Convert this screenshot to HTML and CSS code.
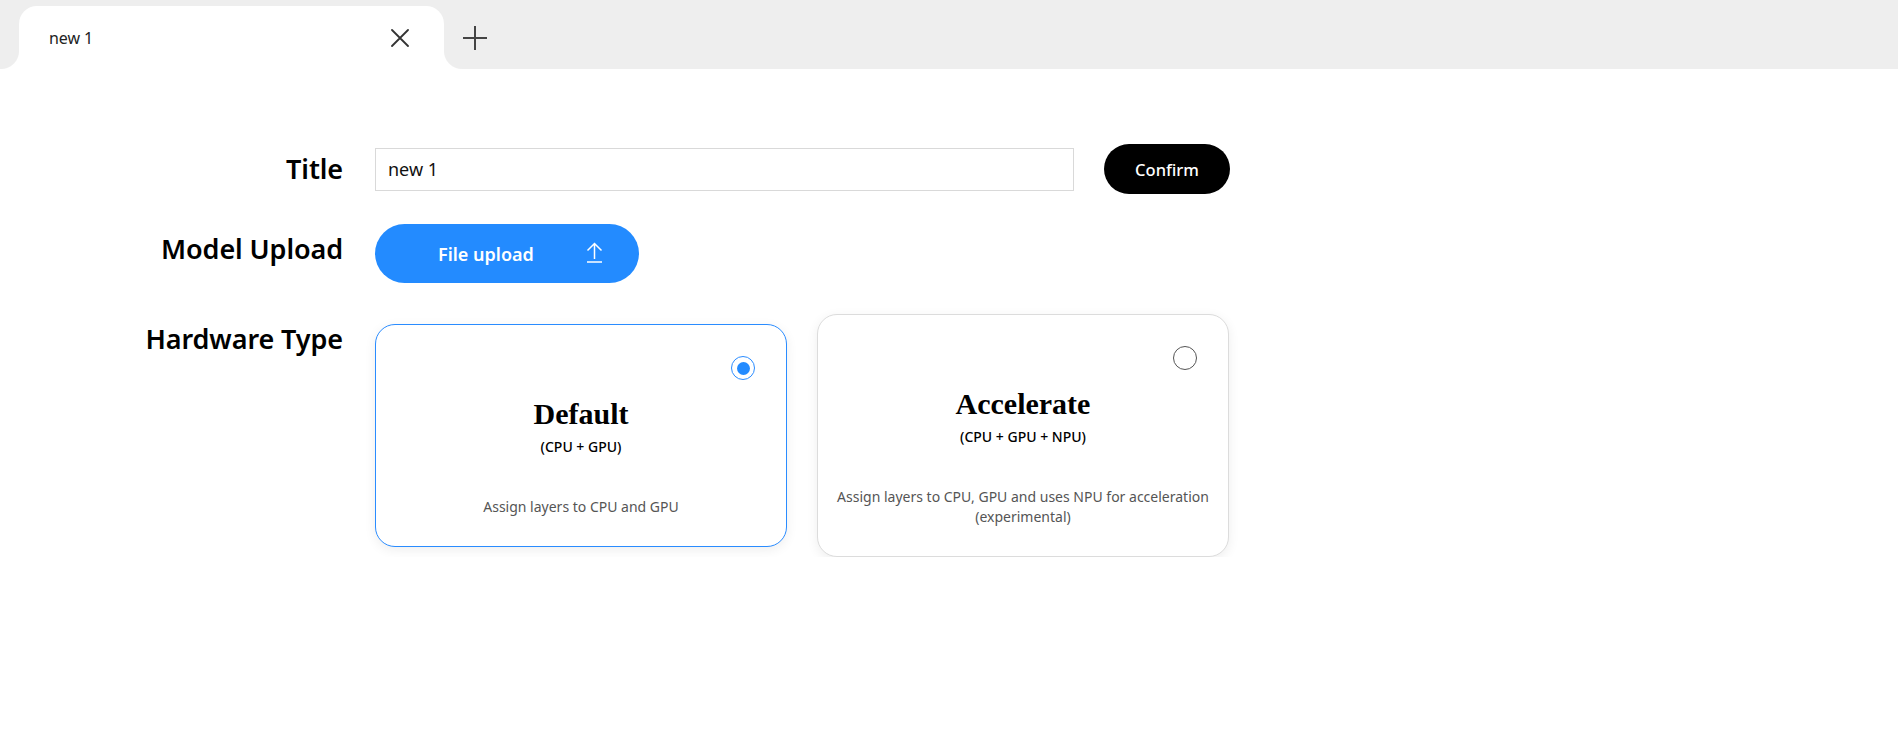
FILE: index.html
```html
<!DOCTYPE html>
<html lang="en">
<head>
<meta charset="utf-8">
<title>new 1</title>
<link rel="stylesheet" href="styles.css">
</head>
<body>
<header class="tabbar">
  <div class="tab">
    <span class="tab-title">new 1</span>
    <button class="icon-btn tab-close" aria-label="Close tab">
      <svg width="18" height="18" viewBox="0 0 18 18"><path d="M1 1 L17 17 M17 1 L1 17" stroke="#333" stroke-width="1.8" fill="none" stroke-linecap="round"/></svg>
    </button>
  </div>
  <button class="icon-btn tab-add" aria-label="New tab">
    <svg width="26" height="26" viewBox="0 0 26 26"><path d="M13 1 V25 M1 13 H25" stroke="#444" stroke-width="2" fill="none"/></svg>
  </button>
</header>

<main class="form">
  <div class="label">Title</div>
  <div class="field field-title">
    <input class="text-input" type="text" value="new 1">
    <button class="btn-confirm">Confirm</button>
  </div>

  <div class="label">Model Upload</div>
  <div class="field">
    <button class="btn-upload">
      <span class="btn-upload-text">File upload</span>
      <svg class="upload-icon" width="17" height="21" viewBox="0 0 17 21"><path d="M8.5 1.5 V17 M1.5 8.5 L8.5 1.5 L15.5 8.5 M1 20 H16" stroke="#fff" stroke-width="1.5" fill="none"/></svg>
    </button>
  </div>

  <div class="label label-hw">Hardware Type</div>
  <div class="field cards">
    <div class="card card-selected">
      <span class="radio radio-on"></span>
      <div class="card-title">Default</div>
      <div class="card-sub">(CPU + GPU)</div>
      <div class="card-desc">Assign layers to CPU and GPU</div>
    </div>
    <div class="card">
      <span class="radio"></span>
      <div class="card-title">Accelerate</div>
      <div class="card-sub">(CPU + GPU + NPU)</div>
      <div class="card-desc">Assign layers to CPU, GPU and uses NPU for acceleration (experimental)</div>
    </div>
  </div>
</main>
</body>
</html>
```

FILE: styles.css
```css
* { box-sizing: border-box; }

html, body {
  margin: 0;
  padding: 0;
  background: #ffffff;
  font-family: "Noto Sans", "Open Sans", sans-serif;
  color: #000;
}

.icon-btn {
  border: 0;
  background: none;
  padding: 0;
  margin: 0;
  display: flex;
  align-items: center;
  justify-content: center;
  cursor: pointer;
}

/* ---------- tab bar ---------- */
.tabbar {
  height: 69px;
  background: #eeeeee;
  display: flex;
  align-items: stretch;
  padding-top: 6px;
}

.tab {
  position: relative;
  margin-left: 19px;
  width: 425px;
  background: #ffffff;
  border-radius: 18px 18px 0 0;
  display: flex;
  align-items: center;
  justify-content: space-between;
  padding: 0 35px 0 30px;
}

.tab::before,
.tab::after {
  content: "";
  position: absolute;
  bottom: 0;
  width: 18px;
  height: 18px;
}
.tab::before {
  left: -18px;
  background: radial-gradient(circle at 0 0, #eeeeee 17.5px, #ffffff 18.5px);
}
.tab::after {
  right: -18px;
  background: radial-gradient(circle at 100% 0, #eeeeee 17.5px, #ffffff 18.5px);
}

.tab-title {
  font-size: 16px;
  color: #222;
  letter-spacing: -0.1px;
}

.tab-close {
  width: 18px;
  height: 18px;
}

.tab-add {
  margin-left: 18px;
  width: 26px;
  height: 63px;
}

/* ---------- form ---------- */
.form {
  display: grid;
  grid-template-columns: 343px auto;
  column-gap: 32px;
  row-gap: 30px;
  padding-top: 75px;
  align-items: start;
}

.label {
  justify-self: end;
  font-size: 27px;
  font-weight: 600;
  line-height: 38px;
  padding-top: 6px;
  letter-spacing: -0.1px;
}

.label-hw {
  margin-top: 1px;
}

.field {
  display: flex;
  align-items: center;
}

.field-title {
  gap: 30px;
}

.text-input {
  width: 699px;
  height: 43px;
  border: 1px solid #d9d9d9;
  padding: 0 12px;
  font-family: inherit;
  font-size: 18px;
  color: #111;
  outline: none;
}

.btn-confirm {
  width: 126px;
  height: 50px;
  border: 0;
  border-radius: 25px;
  background: #000;
  color: #fff;
  font-family: inherit;
  font-size: 16.5px;
  font-weight: 500;
}

.btn-upload {
  width: 264px;
  height: 59px;
  border: 0;
  border-radius: 30px;
  background: #238bff;
  color: #fff;
  display: flex;
  align-items: center;
  padding: 0 0 0 63px;
  font-family: inherit;
}

.btn-upload-text {
  font-size: 18px;
  font-weight: 600;
}

.upload-icon {
  margin-left: 52px;
  margin-top: -2px;
}

/* ---------- cards ---------- */
.cards {
  gap: 30px;
  align-items: center;
  margin-top: 1px;
}

.card {
  position: relative;
  width: 412px;
  border: 1px solid #dcdcdc;
  border-radius: 20px;
  background: #fff;
  box-shadow: 0 3px 12px rgba(0, 0, 0, 0.07);
  padding: 71px 12px 29px;
  text-align: center;
}

.card-selected {
  border-color: #2a8cff;
}

.radio {
  position: absolute;
  top: 31px;
  right: 31px;
  width: 24px;
  height: 24px;
  border-radius: 50%;
  border: 1px solid #555;
  background: #fff;
}

.radio-on {
  border: 1.5px solid #2a8cff;
}
.radio-on::after {
  content: "";
  position: absolute;
  left: 50%;
  top: 50%;
  width: 13px;
  height: 13px;
  margin: -6.5px 0 0 -6.5px;
  border-radius: 50%;
  background: #238bff;
}

.card-title {
  font-family: "Liberation Serif", "Times New Roman", serif;
  font-weight: 700;
  font-size: 30px;
  line-height: 36px;
}

.card-sub {
  margin-top: 5px;
  font-size: 14px;
  font-weight: 500;
  line-height: 20px;
}

.card-desc {
  margin-top: 40px;
  font-size: 14px;
  line-height: 20px;
  color: #555;
}
```
